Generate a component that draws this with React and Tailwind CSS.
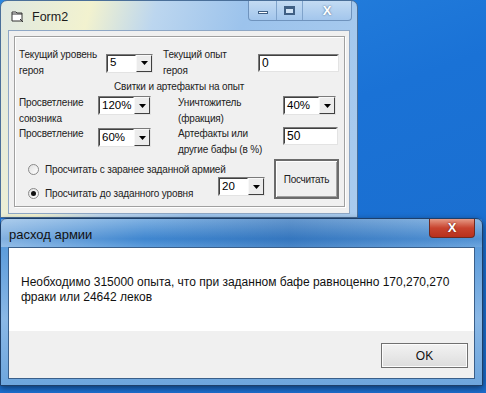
import React from 'react'

function Combo({ value, w }) {
  return (
    <div className={`flex h-[19px] ${w} border border-t-[#7a7a7a] border-l-[#7a7a7a] border-b-[#e3e3e3] border-r-[#e3e3e3] bg-white`}>
      <div className="flex-1 border border-t-[#404040] border-l-[#404040] border-b-white border-r-white flex items-center pl-[2px] text-[11.5px] leading-none text-black">{value}</div>
      <div className="w-[16px] border border-t-[#f8f8f8] border-l-[#f8f8f8] border-b-[#404040] border-r-[#404040] bg-[#ececec] flex items-center justify-center">
        <svg width="7" height="4" viewBox="0 0 7 4"><path d="M0 0h7L3.5 4z" fill="#000" /></svg>
      </div>
    </div>
  )
}

function TextBox({ value, w }) {
  return (
    <div className={`h-[18px] ${w} border border-t-[#7a7a7a] border-l-[#7a7a7a] border-b-[#e3e3e3] border-r-[#e3e3e3] bg-white`}>
      <div className="h-full border border-t-[#404040] border-l-[#404040] border-b-white border-r-white flex items-center pl-[2px] text-[12px] leading-none text-black">{value}</div>
    </div>
  )
}

function Radio({ checked, label }) {
  return (
    <div className="flex items-center gap-[6px] h-[16px]">
      <div className="shrink-0 w-[11px] h-[11px] rounded-full border border-[#8a8a8a] bg-[linear-gradient(135deg,#e0e0e0,#ffffff)] flex items-center justify-center">
        {checked && <div className="w-[5px] h-[5px] rounded-full bg-[#111]" />}
      </div>
      <span className="text-[10px] tracking-[-0.15px] whitespace-nowrap text-[#222]">{label}</span>
    </div>
  )
}

function Lbl({ children, w }) {
  return <div className={`${w} text-[10px] tracking-[-0.15px] whitespace-nowrap leading-[16px] text-[#222]`}>{children}</div>
}

export default function App() {
  return (
    <div className="relative w-[486px] h-[393px] overflow-hidden bg-[linear-gradient(160deg,#2a86e0_0%,#1a72d6_40%,#1b6ccb_100%)] font-['Liberation_Sans',Arial,sans-serif]">
      {/* Form2 */}
      <div className="absolute left-0 top-0 w-[358px] h-[218px] rounded-t-[7px] border border-[#4a6f99] bg-[linear-gradient(105deg,#dfe8e2_0%,#f2f2cf_22%,#bcd6ef_38%,#9cc3ec_60%,#a9cbee_100%)] flex flex-col">
        <div className="h-[29px] flex items-start">
          <div className="flex items-center gap-[8px] pl-[10px] pt-[7px]">
            <svg width="13" height="12" viewBox="0 0 13 12">
              <path d="M1 1h4l1 1h5v8H1z" fill="#fff" stroke="#333" strokeWidth="1" />
              <path d="M1 3h10" stroke="#333" />
              <path d="M9 8l3 3" stroke="#333" />
            </svg>
            <span className="text-[12.5px] text-[#1b1b1b]">Form2</span>
          </div>
          <div className="ml-auto mr-[5px] flex h-[20px] rounded-b-[4px] border border-t-0 border-[#6f93bd] bg-[linear-gradient(#c3dbf3,#a3c6ec)] overflow-hidden">
            <div className="w-[28px] flex items-center justify-center border-r border-[#7fa3cb]">
              <div className="w-[10px] h-[3px] bg-white border border-[#3f5f84] mt-[4px]" />
            </div>
            <div className="w-[26px] flex items-center justify-center border-r border-[#7fa3cb]">
              <div className="w-[11px] h-[9px] border-2 border-t-[3px] border-[#3f5f84] bg-white/40" />
            </div>
            <div className="w-[48px] flex items-center justify-center">
              <span className="text-[13px] font-bold text-white [text-shadow:0_0_2px_#3f5f84]">X</span>
            </div>
          </div>
        </div>
        <div className="mx-[7px] h-[184px] border border-[#8ea7c5] bg-[#f0f0f0] p-[5px] pr-[4px]">
          <div className="h-[171px] border border-[#a0a0a0] shadow-[inset_1px_1px_0_#fff,1px_1px_0_#fff] px-[4px] pt-[10px] flex flex-col">
            <div className="flex items-center h-[32px]">
              <Lbl w="w-[87px]">Текущий уровень<br />героя</Lbl>
              <Combo value="5" w="w-[47px]" />
              <div className="ml-[10px]"><Lbl w="w-[95px]">Текущий опыт<br />героя</Lbl></div>
              <TextBox value="0" w="w-[81px]" />
            </div>
            <div className="h-[16px] pl-[95px] text-[10px] tracking-[-0.15px] leading-[16px] text-[#222]">Свитки и артефакты на опыт</div>
            <div className="flex items-start h-[31px]">
              <Lbl w="w-[79px]">Просветление<br />союзника</Lbl>
              <div className="pt-[1px]"><Combo value="120%" w="w-[53px]" /></div>
              <div className="ml-[27px]"><Lbl w="w-[105px]">Уничтожитель<br />(фракция)</Lbl></div>
              <div className="pt-[1px]"><Combo value="40%" w="w-[53px]" /></div>
            </div>
            <div className="flex items-start h-[33px]">
              <Lbl w="w-[79px]">Просветление</Lbl>
              <div className="pt-[2px]"><Combo value="60%" w="w-[53px]" /></div>
              <div className="ml-[27px]"><Lbl w="w-[105px]">Артефакты или<br />другие бафы (в %)</Lbl></div>
              <div className="pt-[1px]"><TextBox value="50" w="w-[55px]" /></div>
            </div>
            <div className="flex items-start">
              <div className="flex flex-col gap-[8px] pl-[9px] pt-[2px] w-[199px]">
                <Radio label="Просчитать с заранее заданной армией" />
                <Radio checked label="Просчитать до заданного уровня" />
              </div>
              <div className="pt-[18px]"><Combo value="20" w="w-[47px]" /></div>
              <div className="ml-[9px] w-[65px] h-[40px] border-2 border-[#6b6b6b] bg-[#efefef] shadow-[inset_1px_1px_0_#fff,inset_-1px_-1px_0_#a0a0a0] flex items-center justify-center text-[10px] tracking-[-0.3px] text-[#222]">Посчитать</div>
            </div>
          </div>
        </div>
      </div>

      {/* dialog */}
      <div className="absolute left-0 top-[218px] w-[483px] h-[168px] rounded-t-[7px] border border-[#1d3f6a] bg-[linear-gradient(180deg,#7fb1e2_0%,#3f86cf_12%,#5c9cdb_17%,#8ab8e6_60%,#6ea6dd_100%)] shadow-[0_2px_6px_rgba(0,0,0,0.5)] flex flex-col">
        <div className="h-[28px] flex items-start bg-[linear-gradient(90deg,rgba(255,255,255,0.35),rgba(255,255,255,0)_30%,rgba(20,70,140,0.25)_60%,rgba(255,255,255,0.1))]">
          <span className="pl-[8px] pt-[6px] text-[13px] text-[#111]">расход армии</span>
          <div className="ml-auto mr-[7px] w-[46px] h-[19px] rounded-b-[4px] border border-t-0 border-[#6d2a22] bg-[linear-gradient(#e69a85,#c8432e_50%,#b8301d)] flex items-center justify-center">
            <span className="text-[13px] font-bold text-white [text-shadow:0_0_2px_#5a1a10]">X</span>
          </div>
        </div>
        <div className="mx-[7px] flex-1 mb-[6px] border border-[#3a5f8a] flex flex-col">
          <div className="h-[83px] bg-white pl-[12px] pt-[27px] text-[12px] leading-[15px] text-[#111]">
            Необходимо 315000 опыта, что при заданном бафе равноценно 170,270,270<br />фраки или 24642 леков
          </div>
          <div className="flex-1 bg-[#f0f0f0] flex justify-end items-start pt-[12px] pr-[6px]">
            <div className="w-[87px] h-[25px] border border-[#707070] bg-[linear-gradient(#f2f2f2,#e8e8e8_50%,#dcdcdc)] shadow-[inset_0_0_0_1px_#fcfcfc] flex items-center justify-center text-[12px] text-[#111]">OK</div>
          </div>
        </div>
      </div>
    </div>
  )
}
